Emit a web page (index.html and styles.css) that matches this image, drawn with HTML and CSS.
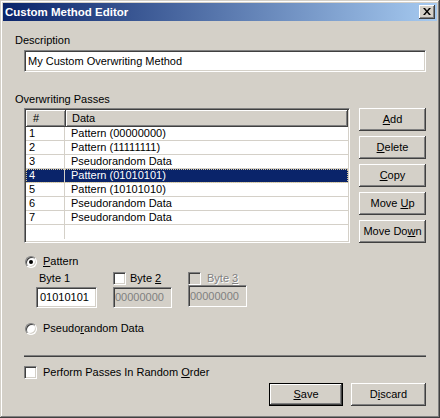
FILE: index.html
```html
<!DOCTYPE html>
<html>
<head>
<meta charset="utf-8">
<link rel="stylesheet" href="styles.css">
</head>
<body>
<div class="window">
  <div class="titlebar">
    <span class="title">Custom Method Editor</span>
    <span class="close"><svg width="8" height="7" viewBox="0 0 8 7"><path d="M0 0h2l2 2.5L6 0h2L5 3.5 8 7H6L4 4.5 2 7H0l3-3.5z" fill="#000"/></svg></span>
  </div>
  <div class="client">
    <div class="label">Description</div>
    <div class="field desc">My Custom Overwriting Method</div>
    <div class="label passes-label">Overwriting Passes</div>
    <div class="passes">
      <div class="listview">
        <div class="lv-header">
          <div class="hcell c1">#</div>
          <div class="hcell c2">Data</div>
        </div>
        <div class="lv-body">
          <div class="row"><span class="c1">1</span><span class="c2">Pattern (00000000)</span></div>
          <div class="row"><span class="c1">2</span><span class="c2">Pattern (11111111)</span></div>
          <div class="row"><span class="c1">3</span><span class="c2">Pseudorandom Data</span></div>
          <div class="row sel"><span class="c1">4</span><span class="c2">Pattern (01010101)</span></div>
          <div class="row"><span class="c1">5</span><span class="c2">Pattern (10101010)</span></div>
          <div class="row"><span class="c1">6</span><span class="c2">Pseudorandom Data</span></div>
          <div class="row"><span class="c1">7</span><span class="c2">Pseudorandom Data</span></div>
          <div class="row empty"><span class="c1"></span><span class="c2"></span></div>
        </div>
      </div>
      <div class="side-buttons">
        <div class="btn"><span><u>A</u>dd</span></div>
        <div class="btn"><span><u>D</u>elete</span></div>
        <div class="btn"><span><u>C</u>opy</span></div>
        <div class="btn"><span>Move <u>U</u>p</span></div>
        <div class="btn"><span>Move Do<u>w</u>n</span></div>
      </div>
    </div>

    <div class="opt-row pattern-row">
      <span class="radio checked"></span><span class="opt-text"><u>P</u>attern</span>
    </div>
    <div class="byte-labels">
      <div class="bcol b1"><span class="btxt">Byte 1</span></div>
      <div class="bcol b2"><span class="check"></span><span class="btxt">Byte <u>2</u></span></div>
      <div class="bcol b3"><span class="check disabled"></span><span class="btxt dis">Byte <u>3</u></span></div>
    </div>
    <div class="byte-fields">
      <div class="field bf b1">01010101</div>
      <div class="field bf b2 disabled">00000000</div>
      <div class="field bf b3 disabled">00000000</div>
    </div>
    <div class="opt-row pseudo-row">
      <span class="radio"></span><span class="opt-text">Pseudo<u>r</u>andom Data</span>
    </div>

    <div class="separator"></div>

    <div class="opt-row random-row">
      <span class="check"></span><span class="opt-text">Perform Passes In Random <u>O</u>rder</span>
    </div>

    <div class="bottom-buttons">
      <div class="default-wrap"><div class="btn save"><span><u>S</u>ave</span></div></div>
      <div class="btn discard"><span>D<u>i</u>scard</span></div>
    </div>
  </div>
</div>
</body>
</html>
```

FILE: styles.css
```css
html, body {
  margin: 0;
  padding: 0;
  background: #d4d0c8;
}

body {
  font-family: "Liberation Sans", Arial, sans-serif;
  font-size: 11px;
  line-height: 13px;
  color: #000;
}

.window {
  width: 440px;
  height: 418px;
  box-sizing: border-box;
  padding: 3px;
  background: #d4d0c8;
  box-shadow: inset -1px -1px #404040, inset 1px 1px #d4d0c8, inset -2px -2px #808080, inset 2px 2px #ffffff;
  display: flex;
  flex-direction: column;
}

.titlebar {
  height: 18px;
  flex: none;
  display: flex;
  align-items: center;
  justify-content: space-between;
  background: linear-gradient(to right, #0a246a, #a6caf0);
  padding: 0 2px;
}

.title {
  color: #fff;
  font-weight: bold;
  font-size: 11.5px;
  line-height: 13px;
}

.close {
  width: 16px;
  height: 14px;
  box-sizing: border-box;
  background: #d4d0c8;
  box-shadow: inset -1px -1px #404040, inset 1px 1px #ffffff, inset -2px -2px #808080;
  display: flex;
  align-items: center;
  justify-content: center;
  padding-bottom: 1px;
}

.client {
  flex: 1;
  margin-top: 1px;
  padding: 0 11px 0 12px;
  display: flex;
  flex-direction: column;
}

.label {
  margin-top: 12px;
  height: 13px;
}

.passes-label {
  margin-top: 21px;
}

.field {
  box-sizing: border-box;
  background: #fff;
  border: 1px solid;
  border-color: #808080 #ffffff #ffffff #808080;
  box-shadow: inset 1px 1px #404040, inset -1px -1px #d4d0c8;
  padding-left: 3px;
  display: flex;
  align-items: center;
  white-space: nowrap;
}

.desc {
  margin: 3px 0 0 9px;
  height: 22px;
}

.passes {
  margin: 2px 0 0 9px;
  display: flex;
  gap: 9px;
}

.listview {
  width: 326px;
  height: 135px;
  box-sizing: border-box;
  border: 1px solid;
  border-color: #808080 #ffffff #ffffff #808080;
  box-shadow: inset 1px 1px #404040, inset -1px -1px #d4d0c8;
  padding: 1px;
  background: #fff;
  display: flex;
  flex-direction: column;
  overflow: hidden;
}

.lv-header {
  display: flex;
  height: 17px;
  flex: none;
  background: #d4d0c8;
}

.hcell {
  box-sizing: border-box;
  height: 17px;
  box-shadow: inset -1px -1px #404040, inset 1px 1px #ffffff, inset -2px -2px #808080;
  display: flex;
  align-items: center;
}

.hcell.c1 {
  width: 40px;
  padding-left: 7px;
}

.hcell.c2 {
  width: 282px;
  padding-left: 6px;
}

.lv-body {
  flex: 1;
}

.row {
  display: flex;
  height: 14px;
  box-sizing: border-box;
  border-bottom: 1px solid #d4d0c8;
  white-space: nowrap;
}

.row .c1 {
  width: 39px;
  box-sizing: border-box;
  padding-left: 3px;
  border-right: 1px solid #d4d0c8;
}

.row .c2 {
  padding-left: 6px;
  flex: 1;
}

.row.sel {
  background: #0a246a;
  color: #fff;
  outline: 1px dotted #d8c898;
  outline-offset: -1px;
}

.row.empty {
  border-bottom: none;
}

.side-buttons {
  display: flex;
  flex-direction: column;
  gap: 5px;
  width: 67px;
}

.btn {
  box-sizing: border-box;
  height: 23px;
  background: #d4d0c8;
  box-shadow: inset -1px -1px #404040, inset 1px 1px #ffffff, inset -2px -2px #808080;
  display: flex;
  align-items: center;
  justify-content: center;
  white-space: nowrap;
}

.opt-row {
  display: flex;
  align-items: center;
  height: 13px;
}

.pattern-row {
  margin: 12px 0 0 10px;
}

.pseudo-row {
  margin: 14px 0 0 10px;
}

.random-row {
  margin: 9px 0 0 9px;
}

.opt-text {
  margin-left: 6px;
}

.radio {
  width: 12px;
  height: 12px;
  box-sizing: border-box;
  border-radius: 50%;
  border: 1px solid;
  border-color: #808080 #ffffff #ffffff #808080;
  box-shadow: inset 1px 1px #404040, inset -1px -1px #d4d0c8;
  background: #fff;
  display: flex;
  align-items: center;
  justify-content: center;
  flex: none;
}

.radio.checked::after {
  content: "";
  width: 4px;
  height: 4px;
  border-radius: 50%;
  background: #000;
}

.check {
  width: 13px;
  height: 13px;
  box-sizing: border-box;
  border: 1px solid;
  border-color: #808080 #ffffff #ffffff #808080;
  box-shadow: inset 1px 1px #404040, inset -1px -1px #d4d0c8;
  background: #fff;
  flex: none;
}

.check.disabled {
  background: #d4d0c8;
}

.byte-labels {
  display: flex;
  margin: 4px 0 0 21px;
  height: 13px;
  align-items: center;
}

.bcol {
  display: flex;
  align-items: center;
}

.byte-labels .b1 {
  width: 77px;
  padding-left: 3px;
  box-sizing: border-box;
}

.byte-labels .b2 {
  width: 75px;
}

.byte-labels .b2 .btxt {
  margin-left: 4px;
}

.byte-labels .b3 .btxt {
  margin-left: 6px;
}

.btxt.dis {
  color: #808080;
  text-shadow: 1px 1px #ffffff;
}

.byte-fields {
  display: flex;
  align-items: flex-start;
  margin: 2px 0 0 21px;
  gap: 16px;
}

.bf {
  height: 21px;
}

.byte-fields .b1 {
  width: 61px;
  padding-left: 3px;
}

.byte-fields .b2 {
  width: 59px;
}

.byte-fields .b3 {
  width: 59px;
  height: 22px;
  margin-top: -2px;
}

.field.disabled {
  background: #d4d0c8;
  color: #808080;
  padding-left: 1px;
}

.separator {
  margin: 20px 0 0 9px;
  height: 2px;
  background: #404040;
  border-top: 1px solid #808080;
  box-sizing: border-box;
}

.bottom-buttons {
  margin-top: 4px;
  display: flex;
  justify-content: flex-end;
  gap: 8px;
}

.default-wrap {
  border: 1px solid #000;
  width: 74px;
  height: 23px;
  box-sizing: border-box;
}

.default-wrap .btn {
  height: 21px;
}

.discard {
  width: 75px;
}
```
